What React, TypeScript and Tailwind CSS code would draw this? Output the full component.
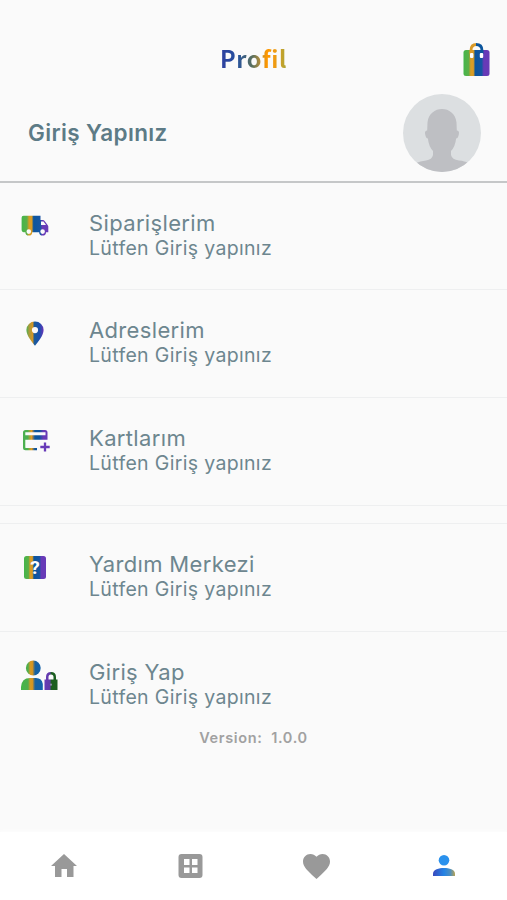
import type { ReactNode } from "react";

function Stripes() {
  return (
    <svg className="absolute h-0 w-0" aria-hidden="true">
      <defs>
        <linearGradient id="stripes" x1="0" x2="1" y1="0" y2="0">
          <stop offset="0" stopColor="#43b64a" />
          <stop offset=".2" stopColor="#5caf48" />
          <stop offset=".28" stopColor="#d99c24" />
          <stop offset=".38" stopColor="#d99c24" />
          <stop offset=".45" stopColor="#0b559d" />
          <stop offset=".7" stopColor="#1556a3" />
          <stop offset=".78" stopColor="#673ab7" />
          <stop offset="1" stopColor="#673ab7" />
        </linearGradient>
        <linearGradient id="pin" x1="0" x2="1" y1="0" y2="0">
          <stop offset="0" stopColor="#4caf50" />
          <stop offset=".16" stopColor="#a89b3c" />
          <stop offset=".36" stopColor="#d39626" />
          <stop offset=".46" stopColor="#1c5c98" />
          <stop offset=".75" stopColor="#194fae" />
          <stop offset="1" stopColor="#6a35b8" />
        </linearGradient>
        <linearGradient id="stripesCard" gradientUnits="userSpaceOnUse" x1="0" x2="28" y1="0" y2="0">
          <stop offset="0" stopColor="#4caf50" />
          <stop offset=".2" stopColor="#4caf50" />
          <stop offset=".34" stopColor="#e49a20" />
          <stop offset=".46" stopColor="#0b559d" />
          <stop offset=".62" stopColor="#0b559d" />
          <stop offset=".76" stopColor="#673ab7" />
          <stop offset="1" stopColor="#673ab7" />
        </linearGradient>
        <linearGradient id="person" gradientUnits="userSpaceOnUse" x1="0" x2="22" y1="0" y2="0">
          <stop offset="0" stopColor="#43b649" />
          <stop offset=".32" stopColor="#4fad4c" />
          <stop offset=".42" stopColor="#d49a24" />
          <stop offset=".52" stopColor="#d8951f" />
          <stop offset=".64" stopColor="#1962a0" />
          <stop offset="1" stopColor="#1262ad" />
        </linearGradient>
        <linearGradient id="lock" x1="0" x2="1" y1="0" y2="0">
          <stop offset="0" stopColor="#673ab7" />
          <stop offset=".42" stopColor="#613ba9" />
          <stop offset=".52" stopColor="#1b5e20" />
          <stop offset="1" stopColor="#1b5e20" />
        </linearGradient>
        <linearGradient id="active" gradientUnits="userSpaceOnUse" x1="0" x2="22" y1="0" y2="0">
          <stop offset="0" stopColor="#3949bd" />
          <stop offset=".5" stopColor="#2483e5" />
          <stop offset=".78" stopColor="#4c8ec0" />
          <stop offset="1" stopColor="#b7a353" />
        </linearGradient>
      </defs>
    </svg>
  );
}

function BagIcon() {
  return (
    <svg className="mt-px h-[34px] w-[27px]" viewBox="0 0 27 34">
      <rect x=".5" y="7" width="26" height="26" rx="2.5" fill="url(#stripes)" />
      <path d="M8 11V7.500q0-6 5.500-6" fill="none" stroke="#d99a28" strokeWidth="2.8" />
      <path d="M13 1.500Q19 1.500 19 7.500V11" fill="none" stroke="#0b559d" strokeWidth="2.8" />
      <rect x="7" y="10" width="3.400" height="5" rx="1" fill="#fff" />
      <rect x="16.800" y="10" width="3.400" height="5" rx="1" fill="#fff" />
    </svg>
  );
}

function TruckIcon() {
  return (
    <svg className="-mt-px ml-[21px] h-[21px] w-7" viewBox="0 0 28 21">
      <path
        fillRule="evenodd"
        fill="url(#stripes)"
        d="M2.5.8h17V5h2.4q1 0 1.7.9l3.2 4.3q.5.6.5 1.4v5.6H25a3.4 3.4 0 0 1-6.8 0h-7a3.4 3.4 0 0 1-6.8 0H2.5Q.6 17 .6 15V2.7Q.6.8 2.5.8ZM20 6.6v3.3h5L22.5 6.6ZM5.5 16.6a2.300 2.300 0 1 0 4.600 0 2.300 2.300 0 1 0-4.600 0M19.300 16.600a2.300 2.300 0 1 0 4.600 0 2.300 2.300 0 1 0-4.600 0"
      />
    </svg>
  );
}

function PinIcon() {
  return (
    <svg className="ml-[26px] h-[25px] w-[18px]" viewBox="0 0 18 25">
      <path
        fill="url(#pin)"
        fillRule="evenodd"
        d="M9 .5A8.5 8.5 0 0 1 17.6 9C17.6 14.5 12 21 9 24.7 6 21 .4 14.5.4 9A8.5 8.5 0 0 1 9 .5ZM9 6a3.1 3.1 0 1 0 0 6.2A3.1 3.1 0 0 0 9 6Z"
      />
    </svg>
  );
}

function CardIcon() {
  return (
    <svg className="mt-px ml-[22px] h-6 w-7" viewBox="0 0 28 24">
      <path
        fill="url(#stripesCard)"
        fillRule="evenodd"
        d="M3.5 1h19.500Q25.500 1 25.500 3.500V10.700H3.300v7.500q0 .9.900.9H15v2.200H3.500Q1 21.300 1 18.800V3.500Q1 1 3.500 1Zm-.2 2.200v3H23.500v-3Z"
      />
      <path d="M23 13.5v9M18.3 18h9.4" stroke="#673ab7" strokeWidth="2.3" />
    </svg>
  );
}

function HelpIcon() {
  return (
    <span className="relative ml-6 block h-[23px] w-[22px]">
      <svg className="h-full w-full" viewBox="0 0 22 23">
        <rect width="22" height="23" rx="2.5" fill="url(#stripes)" />
      </svg>
      <span className="absolute inset-0 text-center font-['Roboto',sans-serif] text-[19px] leading-[24px] font-bold text-white">?</span>
    </span>
  );
}

function PersonLockIcon() {
  return (
    <svg className="mt-[2px] ml-[21px] h-[31px] w-[37px]" viewBox="0 0 37 31">
      <circle cx="12.3" cy="8" r="7.4" fill="url(#person)" />
      <path d="M0 30v-3Q.5 18 9 18h6q6 0 6.8 6v6Z" fill="url(#person)" />
      <path
        d="M23.5 19.5H25V17q0-5 5-5t5 5v2.5h1.5V30h-13Zm4 0h5V17q0-2.6-2.5-2.6T27.5 17Z"
        fill="url(#lock)"
        fillRule="evenodd"
      />
      <circle cx="30" cy="24.700" r="1.100" fill="#8d86a8" />
    </svg>
  );
}

function Avatar() {
  return (
    <svg className="h-[78px] w-[78px]" viewBox="0 0 78 78">
      <clipPath id="round">
        <circle cx="39" cy="39" r="39" />
      </clipPath>
      <g clipPath="url(#round)">
        <rect width="78" height="78" fill="#dcdfe1" />
        <path
          fill="#bebfc3"
          d="M39 15c7 0 13.500 4.500 14.500 13.500l.3 8q2.700 0 2.100 3.500-.8 4.500-2.800 4.500-.8 8-5.100 12.500v4q1 4.500 8 5.500 6 .500 9 2.500V78H13v-9q4-2 10-2.500 6-1 7-5.500v-4q-4.300-4.500-5.100-12.500-2 0-2.800-4.500-.6-3.500 2.100-3.500l.3-8C25.500 19.500 32 15 39 15Z"
        />
      </g>
    </svg>
  );
}

function Row({ icon, title, last }: { icon: ReactNode; title: string; last?: boolean }) {
  return (
    <div className={`flex h-[107.7px] ${last ? "" : "border-b border-[#eeeff0]"}`}>
      <div className="flex h-[86px] w-[89px] shrink-0 items-center">{icon}</div>
      <div className="pt-[26px] whitespace-nowrap text-[#6d868f]">
        <div className="text-[22px] leading-[28px] tracking-[0.35px]">{title}</div>
        <div className="text-[19.5px] leading-[22px] tracking-[0.33px]">Lütfen Giriş yapınız</div>
      </div>
    </div>
  );
}

export default function App() {
  return (
    <div className="flex h-[900px] w-[507px] flex-col overflow-hidden bg-[#fafafa] font-['Inter',sans-serif]">
      <Stripes />
      <header className="grid h-[92px] grid-cols-[1fr_auto_1fr] pt-[42px]">
        <span />
        <h1 className="-mt-[2px] bg-[linear-gradient(90deg,#303f9f_0%,#24509f_25%,#59705f_48%,#9d8744_57%,#ff9800_70%,#ef9b13_82%,#a5a63b_100%)] bg-clip-text font-['Noto_Sans_CJK_SC',sans-serif] text-[23.5px] leading-[36px] font-bold tracking-[0.6px] text-transparent">
          Profil
        </h1>
        <div className="flex justify-end pr-[17px]">
          <BagIcon />
        </div>
      </header>
      <section className="flex h-[90.5px] items-center justify-between border-b-2 border-[#c5c7c8] pr-[26px] pb-[7px] pl-7">
        <h2 className="text-[22.500px] leading-7 font-semibold tracking-[0.35px] text-[#5d7b86]">Giriş Yapınız</h2>
        <Avatar />
      </section>
      <main className="flex flex-1 flex-col">
        <div className="h-[322px]">
          <Row icon={<TruckIcon />} title="Siparişlerim" />
          <Row icon={<PinIcon />} title="Adreslerim" />
          <Row icon={<CardIcon />} title="Kartlarım" />
        </div>
        <div className="mt-[18.5px] border-t border-[#eeeff0]">
          <Row icon={<HelpIcon />} title="Yardım Merkezi" />
          <Row icon={<PersonLockIcon />} title="Giriş Yap" last />
        </div>
        <p className="-mt-[11px] text-center text-[14.5px] leading-5 font-semibold tracking-[0.65px] whitespace-pre text-[#a1a1a1]">
          Version:  1.0.0
        </p>
      </main>
      <nav className="grid h-[68px] grid-cols-4 bg-white shadow-[0_-1px_3px_#fdfdfd]">
        <div className="flex justify-center pt-[21px] pl-[2px]">
          <svg className="h-[25px] w-[26px]" viewBox="0 0 26 25">
            <path fill="#999" d="M13 1 26 13h-3.500v11h-6.500v-8h-5.500v8H4V13H0Z" />
          </svg>
        </div>
        <div className="flex justify-center pt-[21px] pl-[2px]">
          <svg className="h-[26px] w-[26px]" viewBox="0 0 26 26">
            <path
              fill="#999"
              fillRule="evenodd"
              d="M3.500 1h18Q24.500 1 24.500 4v18q0 3-3 3h-18q-3 0-3-3V4q0-3 3-3ZM6 6v6h5.500V6Zm8 0v6h5.500V6Zm-8 8.500v5.500h5.500v-5.500Zm8 0v5.500h5.500v-5.500Z"
            />
          </svg>
        </div>
        <div className="flex justify-center pt-[21px]">
          <svg className="mt-px h-[25px] w-[27px]" viewBox="2 3 20 18.35" preserveAspectRatio="none">
            <path
              fill="#999"
              d="m12 21.350-1.450-1.320C5.400 15.360 2 12.280 2 8.500 2 5.420 4.420 3 7.500 3c1.740 0 3.410.810 4.500 2.090C13.090 3.810 14.760 3 16.500 3 19.580 3 22 5.420 22 8.500c0 3.780-3.400 6.860-8.550 11.540L12 21.350z"
            />
          </svg>
        </div>
        <div className="flex justify-center pt-[22px]">
          <svg className="h-[23px] w-[22px]" viewBox="0 0 22 23">
            <circle cx="11" cy="6.300" r="5.300" fill="#2a91ed" />
            <path fill="url(#active)" d="M0 22v-2.500C0 15.700 6 14 11 14s11 1.700 11 5.500V22Z" />
          </svg>
        </div>
      </nav>
    </div>
  );
}
